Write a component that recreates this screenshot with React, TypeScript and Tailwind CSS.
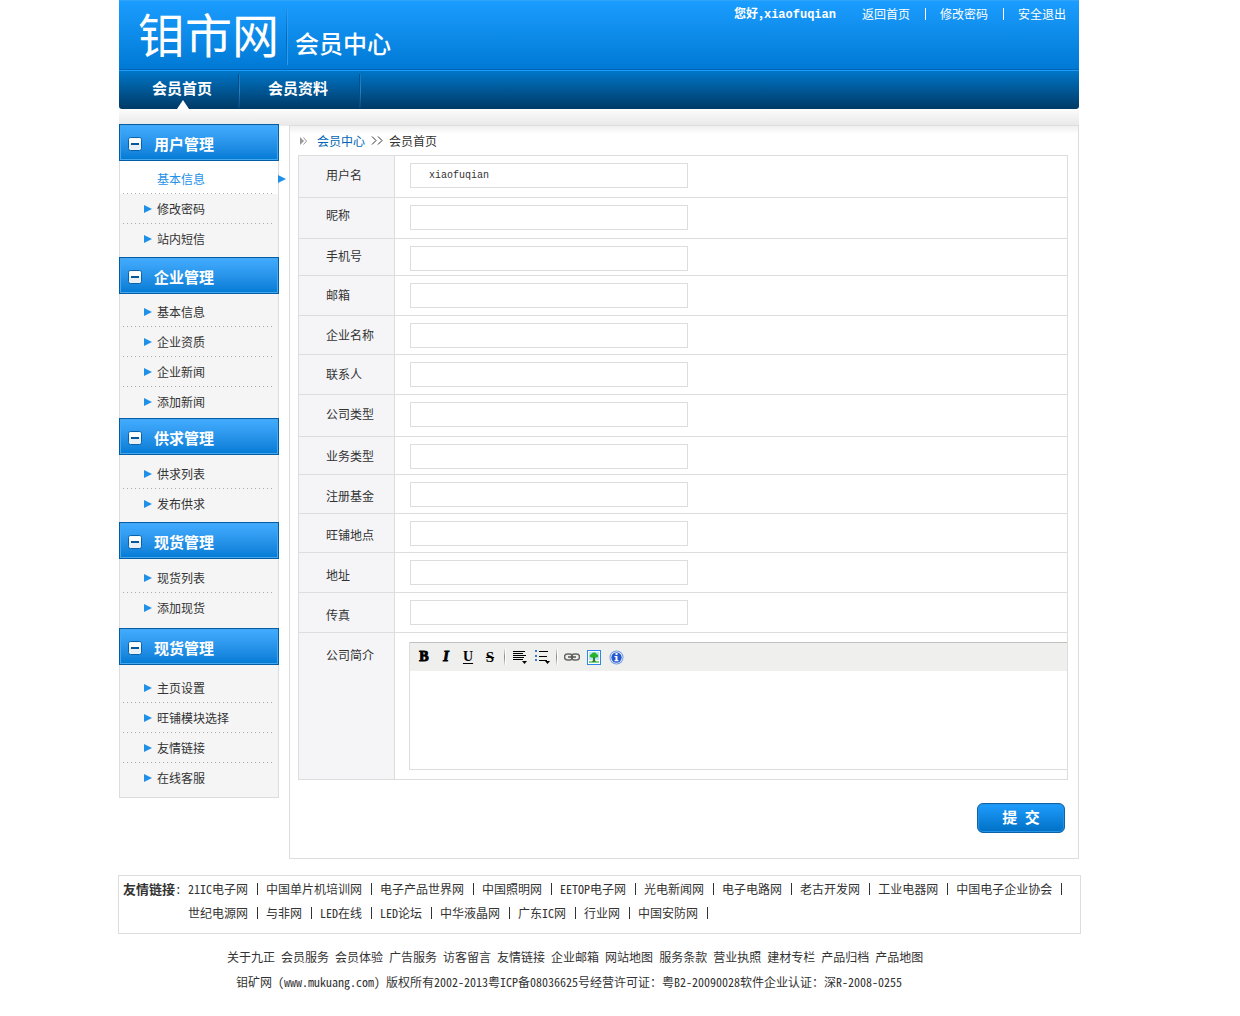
import React from "react";

type Group = { title: string; items: string[]; pad: string; active?: number };

const groups: Group[] = [
  { title: "用户管理", items: ["基本信息", "修改密码", "站内短信"], pad: "pb-[3px]", active: 0 },
  { title: "企业管理", items: ["基本信息", "企业资质", "企业新闻", "添加新闻"], pad: "pt-[3px] pb-px" },
  { title: "供求管理", items: ["供求列表", "发布供求"], pad: "pt-1 pb-[3px]" },
  { title: "现货管理", items: ["现货列表", "添加现货"], pad: "pt-1 pb-[5px]" },
  { title: "现货管理", items: ["主页设置", "旺铺模块选择", "友情链接", "在线客服"], pad: "pt-2 pb-1 border-b" },
];

type Field = { id: string; label: string; height: string; pad: string; value?: string };

const fields: Field[] = [
  { id: "username", label: "用户名", height: "h-[42px]", pad: "pt-[9px]", value: "xiaofuqian" },
  { id: "nickname", label: "昵称", height: "h-[41px]", pad: "pt-[7px]" },
  { id: "mobile", label: "手机号", height: "h-[37px]", pad: "pt-[7px]" },
  { id: "email", label: "邮箱", height: "h-10", pad: "pt-[9px]" },
  { id: "company", label: "企业名称", height: "h-[39px]", pad: "pt-[9px]" },
  { id: "contact", label: "联系人", height: "h-10", pad: "pt-[9px]" },
  { id: "company-type", label: "公司类型", height: "h-[42px]", pad: "pt-[9px]" },
  { id: "business-type", label: "业务类型", height: "h-[38px]", pad: "pt-[9px]" },
  { id: "fund", label: "注册基金", height: "h-[39px]", pad: "pt-[11px]" },
  { id: "shop", label: "旺铺地点", height: "h-[39px]", pad: "pt-[11px]" },
  { id: "address", label: "地址", height: "h-10", pad: "pt-3" },
  { id: "fax", label: "传真", height: "h-10", pad: "pt-3" },
];

const friends = [
  "21IC电子网", "中国单片机培训网", "电子产品世界网", "中国照明网", "EETOP电子网", "光电新闻网",
  "电子电路网", "老古开发网", "工业电器网", "中国电子企业协会", "世纪电源网", "与非网", "LED在线",
  "LED论坛", "中华液晶网", "广东IC网", "行业网", "中国安防网",
];

const footerLinks = [
  "关于九正", "会员服务", "会员体验", "广告服务", "访客留言", "友情链接", "企业邮箱",
  "网站地图", "服务条款", "营业执照", "建材专栏", "产品归档", "产品地图",
];

function Header() {
  return (
    <header>
      <div className="flex h-[69px] justify-between border-t border-[#2fa4fb] bg-linear-to-b from-[#1a9dff] to-[#0079d4] text-white">
        <div className="flex">
          <h1 className="pl-[19px] text-[47px] leading-[64px] font-normal">钼市网</h1>
          <div className="mt-2 ml-[7px] h-14 w-[2px] border-r border-[#2b9cf0] bg-linear-to-b from-[#1690ec] via-[#0068b8] to-[#0079d4]" />
          <p className="pt-[18px] pl-[7px] text-[24px] leading-[48px] font-medium">会员中心</p>
        </div>
        <div className="flex h-[26px] items-center pr-[13px] leading-[26px]">
          <strong className="mr-[26px]">
            您好,<span className="font-['Liberation_Mono',monospace]">xiaofuqian</span>
          </strong>
          <a href="#home">返回首页</a>
          <span className="mr-[14px] ml-[15px] h-3 w-px bg-white" />
          <a href="#password">修改密码</a>
          <span className="mr-[14px] ml-[15px] h-3 w-px bg-white" />
          <a href="#logout">安全退出</a>
        </div>
      </div>
      <nav className="flex h-10 rounded-b-[3px] border-t border-[#0062b0] bg-linear-to-b from-[#0078cc] to-[#003a66] text-[15px] font-bold text-white shadow-[inset_0_1px_0_#1a9dff]">
        <a href="#home" className="relative w-[119px] pl-[33px] leading-9">
          会员首页
          <svg className="absolute bottom-0 left-[58px]" width="12" height="9" viewBox="0 0 12 9" aria-hidden="true">
            <path d="M6 0L12 9H0Z" fill="#fff" />
          </svg>
        </a>
        <span className="mt-1 h-[34px] w-[2px] border-l border-[#004f8a] bg-linear-to-b from-[#1179c4] via-[#2a82c4] to-[#0a4370]" />
        <a href="#profile" className="w-[119px] pl-[28px] leading-9">会员资料</a>
        <span className="mt-1 h-[34px] w-[2px] border-l border-[#004f8a] bg-linear-to-b from-[#1179c4] via-[#2a82c4] to-[#0a4370]" />
      </nav>
      <div className="h-[15px] bg-linear-to-b from-[#fcfcfc] to-[#eaeaea]" />
    </header>
  );
}

function Arrow() {
  return (
    <svg width="8" height="8" viewBox="0 0 8 8" aria-hidden="true">
      <path d="M0 0L8 4L0 8Z" fill="#1e90e8" />
    </svg>
  );
}

function Sidebar() {
  return (
    <aside className="w-40 shrink-0">
      {groups.map((g, gi) => (
        <section key={gi}>
          <h2>
            <button
              type="button"
              className="flex h-[37px] w-full items-center border border-[#005da6] bg-linear-to-b from-[#42adff] to-[#007bd5] pt-[2px] pl-2 text-[15px] font-bold text-white shadow-[inset_0_0_0_1px_#46a7ee]"
            >
              <svg width="14" height="14" viewBox="0 0 14 14" aria-hidden="true">
                <rect x="0.5" y="0.5" width="13" height="13" rx="2" fill="#e9f0f5" stroke="#0a62a8" />
                <rect x="1.5" y="1.5" width="11" height="5" fill="#fff" />
                <rect x="3" y="6" width="8" height="2" fill="#04579b" />
              </svg>
              <span className="pl-3 leading-5">{g.title}</span>
            </button>
          </h2>
          <ul className={`border-x border-[#ddd] bg-[#f5f5f5] ${g.pad}`}>
            {g.items.map((item, i) => {
              const active = g.active === i;
              return (
                <li key={item} className={active ? "relative bg-white pt-[3px]" : ""}>
                  <a
                    href="#item"
                    className={`flex h-[29px] items-center ${active ? "pl-[37px] text-[#1e90e8]" : "gap-[5px] pl-6"}`}
                  >
                    {!active && <Arrow />}
                    {item}
                  </a>
                  {active && (
                    <span className="absolute top-[14px] left-full">
                      <Arrow />
                    </span>
                  )}
                  <div
                    className={`mr-[6px] ml-[3px] h-px ${
                      i < g.items.length - 1 ? "bg-[repeating-linear-gradient(90deg,#aaa_0_1px,transparent_1px_4px)]" : ""
                    }`}
                  />
                </li>
              );
            })}
          </ul>
        </section>
      ))}
    </aside>
  );
}

function Tool({ label, children }: { label: string; children: React.ReactNode }) {
  return (
    <button
      type="button"
      aria-label={label}
      className="flex h-7 w-[22px] items-center justify-center font-['Liberation_Serif',serif] text-[14px] leading-4 font-bold text-black"
    >
      {children}
    </button>
  );
}

function Separator() {
  return <span className="mx-[3px] h-4 w-[2px] border-r border-white bg-linear-to-b from-[#ddd] via-[#888] to-[#ddd]" />;
}

function Editor() {
  return (
    <div className="border-b border-l border-[#ddd]">
      <div className="flex h-[29px] items-center border-t border-[#c0c0c0] bg-[#efefed] pl-[3px]">
        <Tool label="粗体">
          <span className="[-webkit-text-stroke:1px_#000]">B</span>
        </Tool>
        <Tool label="斜体">
          <span className="italic [-webkit-text-stroke:1px_#000]">I</span>
        </Tool>
        <Tool label="下划线">
          <span className="underline underline-offset-2">U</span>
        </Tool>
        <Tool label="删除线">
          <span className="text-[15px] line-through">S</span>
        </Tool>
        <Separator />
        <Tool label="对齐">
          <svg width="16" height="16" viewBox="0 0 16 16">
            <path d="M1 2.5H13M1 4.5H11M1 6.500H14M1 8.500H12M1 10.500H11" stroke="#000" />
            <path d="M10 12H15L12.500 15Z" fill="#000" />
          </svg>
        </Tool>
        <Tool label="列表">
          <svg width="16" height="16" viewBox="0 0 16 16">
            <path d="M5 2.5H14M5 7.500H13M5 11.500H13" stroke="#000" />
            <path d="M1 1H3V3H1ZM1 6H3V8H1ZM1 10H3V12H1Z" fill="#3c78c8" />
            <path d="M11 12H16L13.500 15Z" fill="#000" />
          </svg>
        </Tool>
        <Separator />
        <Tool label="链接">
          <svg width="16" height="8" viewBox="0 0 16 8" fill="none" stroke="#666">
            <rect x="0.5" y="1" width="8" height="6" rx="3" strokeWidth="1.5" />
            <rect x="7.5" y="1" width="8" height="6" rx="3" strokeWidth="1.5" />
            <path d="M4 4H12" stroke="#555" strokeWidth="1.5" />
          </svg>
        </Tool>
        <Tool label="图片">
          <svg width="14" height="15" viewBox="0 0 14 15">
            <rect x="0.5" y="0.5" width="13" height="14" fill="#fff" stroke="#2f86e8" />
            <rect x="2" y="2" width="10" height="8" fill="#b9e6f4" />
            <rect x="2" y="11" width="10" height="2" fill="#7ad67a" />
            <path d="M3 7Q2 5 4.500 4Q5 2 7 2.500Q9 2 9.500 4Q12 5 11 7Q9 8 7 7.500Q5 8 3 7Z" fill="#27b32b" />
            <path d="M6 7H8V10L9 12H5L6 10Z" fill="#357c2d" />
          </svg>
        </Tool>
        <Tool label="信息">
          <svg width="15" height="15" viewBox="0 0 15 15">
            <circle cx="7.500" cy="7.500" r="7" fill="#6f9be0" />
            <circle cx="7.500" cy="7.500" r="6" fill="#fff" />
            <circle cx="7.500" cy="7.500" r="5.200" fill="#2559d0" />
            <path d="M6.500 3H8.500V5H6.500ZM5.500 6H8.500V10H9.500V11.200H5.500V10H6.500V7H5.500Z" fill="#fff" />
          </svg>
        </Tool>
      </div>
      <textarea id="intro" className="block h-[98px] w-full resize-none bg-white px-2 py-1 outline-none" />
    </div>
  );
}

function Content() {
  return (
    <main className="mt-px min-w-0 grow border border-[#ddd] bg-white bg-linear-to-b from-[#efefef] to-white to-[8px] pr-[10px] pb-[25px] pl-2">
      <div className="flex h-[29px] items-center">
        <svg className="mr-[10px] ml-[2px]" width="7" height="8" viewBox="0 0 7 8" aria-hidden="true">
          <path d="M0 0L4 4L0 8Z" fill="#999" />
          <path d="M3.500 0.500L6.500 4L3.500 7.500" fill="none" stroke="#999" />
        </svg>
        <a href="#center" className="text-[#0066b3]">会员中心</a>
        <svg className="mx-[6px]" width="12" height="9" viewBox="0 0 12 9" fill="none" stroke="#333" aria-hidden="true">
          <path d="M1 0.500L5 4.500L1 8.500M7 0.500L11 4.500L7 8.500" />
        </svg>
        <span>会员首页</span>
      </div>
      <form onSubmit={(e) => e.preventDefault()}>
        <table className="w-full border-separate border-spacing-0 border-x border-b border-[#ddd]">
          <tbody>
            {fields.map((f) => (
              <tr key={f.id} className={f.height}>
                <th
                  scope="row"
                  className={`w-24 border-t border-r border-[#ddd] bg-[#f5f5f8] pl-[27px] text-left align-top leading-5 font-normal ${f.pad}`}
                >
                  <label htmlFor={f.id}>{f.label}</label>
                </th>
                <td className="border-t border-[#ddd] pt-[7px] pl-[15px] align-top">
                  <input
                    id={f.id}
                    type="text"
                    defaultValue={f.value}
                    className="block h-[25px] w-[278px] border border-[#ddd] bg-white px-[18px] pb-px font-['Liberation_Mono','Noto_Sans_CJK_SC',monospace] text-[10px] outline-none"
                  />
                </td>
              </tr>
            ))}
            <tr>
              <th
                scope="row"
                className="w-24 border-t border-r border-[#ddd] bg-[#f5f5f8] pt-3 pl-[27px] text-left align-top leading-5 font-normal"
              >
                <label htmlFor="intro">公司简介</label>
              </th>
              <td className="border-t border-[#ddd] pt-[9px] pb-[9px] pl-[14px]">
                <Editor />
              </td>
            </tr>
          </tbody>
        </table>
        <div className="flex justify-end pt-[23px] pr-[3px]">
          <button
            type="submit"
            className="h-[30px] w-[88px] rounded-md border border-[#0a62a8] bg-linear-to-b from-[#1e9dff] to-[#0070c4] pb-[2px] text-[15px] leading-[26px] font-bold text-white shadow-[inset_0_0_0_1px_#2493e6]"
          >
            提 交
          </button>
        </div>
      </form>
    </main>
  );
}

function Footer() {
  return (
    <footer>
      <section className="-mr-[2px] -ml-px mt-4 flex border border-[#ddd] px-1 pt-px pb-2 leading-6">
        <h2 className="w-[65px] shrink-0 text-[13px]">
          <strong>友情链接</strong>:
        </h2>
        <ul className="flex flex-wrap">
          {friends.map((f) => (
            <li key={f} className="flex items-center">
              <a href="#friend">{f}</a>
              <span className="mr-2 ml-[9px] h-3 w-px bg-[#333]" />
            </li>
          ))}
        </ul>
      </section>
      <nav className="mt-[10px] flex flex-wrap gap-x-[6px] pl-[108px] leading-[25px]">
        {footerLinks.map((l) => (
          <a key={l} href="#about">{l}</a>
        ))}
      </nav>
      <p className="pl-[117px] leading-[25px]">
        钼矿网 (www.mukuang.com) 版权所有2002-2013粤ICP备08036625号经营许可证：粤B2-20090028软件企业认证：深R-2008-0255
      </p>
    </footer>
  );
}

export default function App() {
  return (
    <div className="min-h-screen bg-white pb-5 pl-[119px] font-['Noto_Sans_CJK_SC',sans-serif] text-xs text-[#333] [font-feature-settings:'hwid']">
      <div className="w-full max-w-[960px]">
        <Header />
        <div className="flex items-start gap-[10px] bg-[linear-gradient(#eaeaea,#eaeaea)] bg-[length:100%_2px] bg-no-repeat">
          <Sidebar />
          <Content />
        </div>
        <Footer />
      </div>
    </div>
  );
}
